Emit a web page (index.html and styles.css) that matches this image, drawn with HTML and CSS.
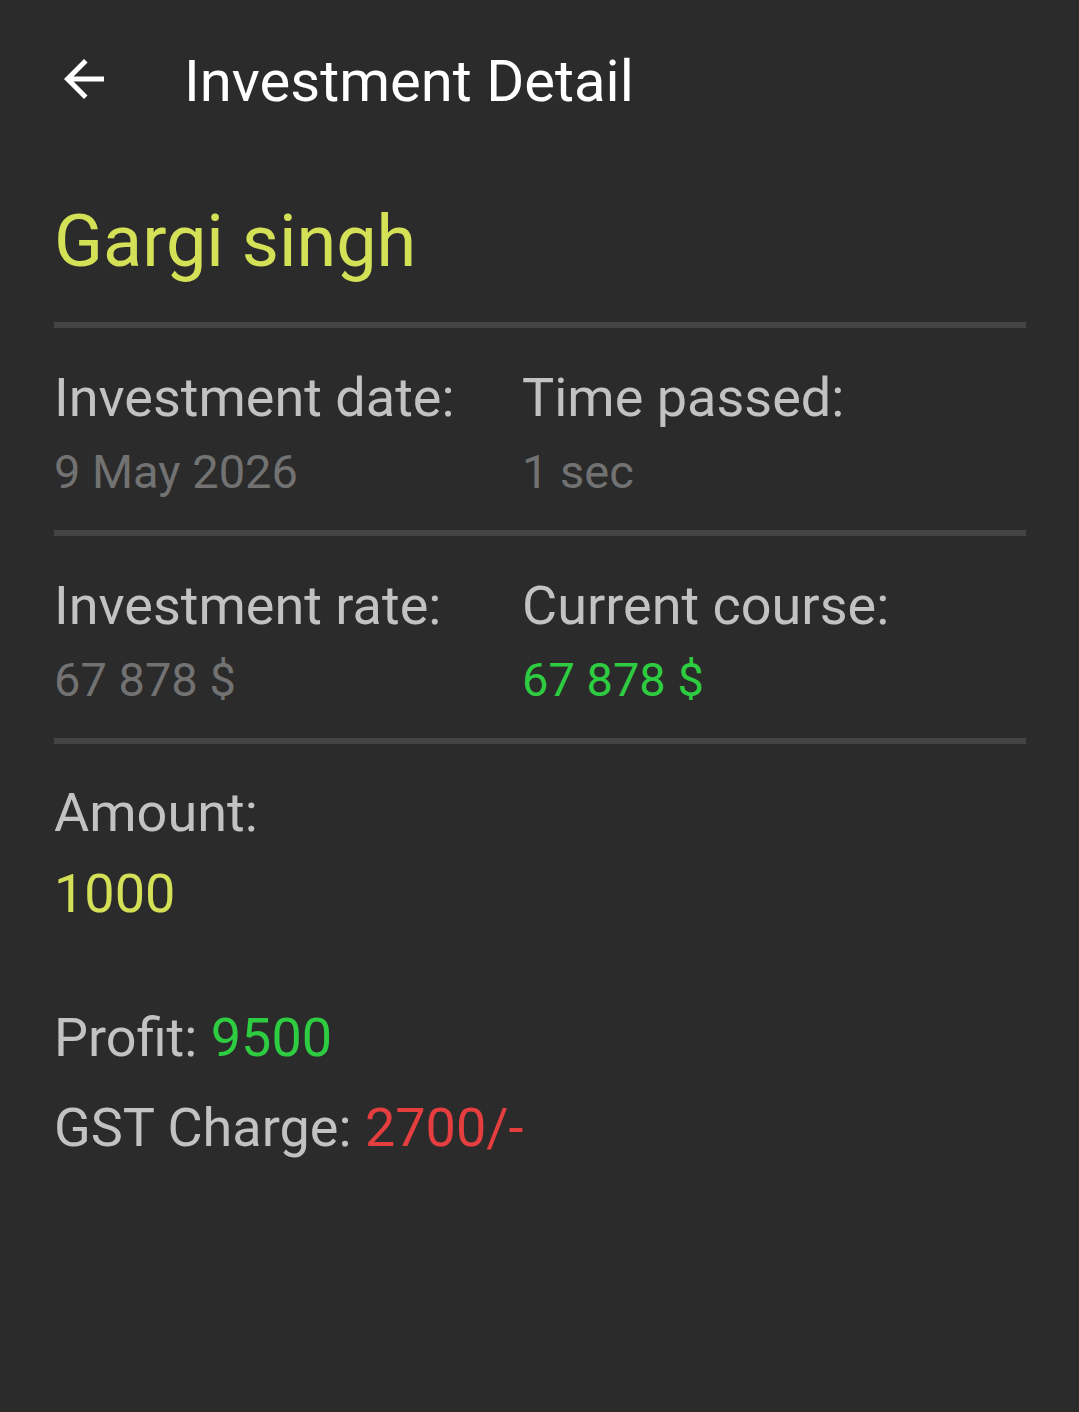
FILE: index.html
```html
<!DOCTYPE html>
<html lang="en">
<head>
<meta charset="utf-8">
<title>Investment Detail</title>
<link rel="stylesheet" href="styles.css">
</head>
<body>
<header class="appbar">
  <svg class="back" viewBox="0 0 24 24" aria-hidden="true"><path d="M20 11H7.83l5.59-5.59L12 4l-8 8 8 8 1.41-1.41L7.83 13H20v-2z"/></svg>
  <h1 class="title">Investment Detail</h1>
</header>
<main class="content">
  <h2 class="name">Gargi singh</h2>
  <hr class="divider">
  <section class="row">
    <div class="cell">
      <div class="label">Investment date:</div>
      <div class="value">9 May 2026</div>
    </div>
    <div class="cell">
      <div class="label">Time passed:</div>
      <div class="value">1 sec</div>
    </div>
  </section>
  <hr class="divider">
  <section class="row">
    <div class="cell">
      <div class="label">Investment rate:</div>
      <div class="value">67 878 $</div>
    </div>
    <div class="cell">
      <div class="label">Current course:</div>
      <div class="value green">67 878 $</div>
    </div>
  </section>
  <hr class="divider">
  <section class="amount">
    <div class="label">Amount:</div>
    <div class="amount-value">1000</div>
  </section>
  <div class="line profit">Profit: <span class="green">9500</span></div>
  <div class="line gst">GST Charge: <span class="red">2700/-</span></div>
</main>
</body>
</html>
```

FILE: styles.css
```css
html, body {
  margin: 0;
  padding: 0;
}
body {
  background: #2b2b2b;
  font-family: Roboto, "Noto Sans", "Liberation Sans", sans-serif;
  min-height: 1412px;
}
.appbar {
  display: flex;
  align-items: flex-start;
  padding: 46px 0 0 54px;
}
.back {
  width: 60px;
  height: 60px;
  margin-top: 3px;
  fill: #ffffff;
  flex: none;
}
.title {
  margin: 0 0 0 70px;
  font-size: 58px;
  line-height: 70px;
  font-weight: 400;
  color: #ffffff;
}
.content {
  padding: 0 53px 0 54px;
}
.name {
  margin: 82px 0 36px 0;
  font-size: 72px;
  line-height: 88px;
  font-weight: 400;
  color: #d4e157;
}
.divider {
  border: 0;
  margin: 0;
  height: 6px;
  background: #444444;
}
.row {
  display: grid;
  grid-template-columns: 468px 1fr;
  padding: 38px 0 31px 0;
}
.cell {
  display: flex;
  flex-direction: column;
  gap: 15px;
}
.label {
  font-size: 54px;
  line-height: 64px;
  color: #c2c2c2;
}
.value {
  font-size: 47px;
  line-height: 54px;
  color: #727272;
}
.green {
  color: #2ecc40;
}
.red {
  color: #e53e3e;
}
.amount {
  display: flex;
  flex-direction: column;
  gap: 17px;
  padding-top: 37px;
}
.amount-value {
  font-size: 54px;
  line-height: 64px;
  color: #d4e157;
}
.line {
  font-size: 54px;
  line-height: 64px;
  color: #c2c2c2;
}
.profit {
  margin-top: 80px;
}
.gst {
  margin-top: 26px;
}
```
